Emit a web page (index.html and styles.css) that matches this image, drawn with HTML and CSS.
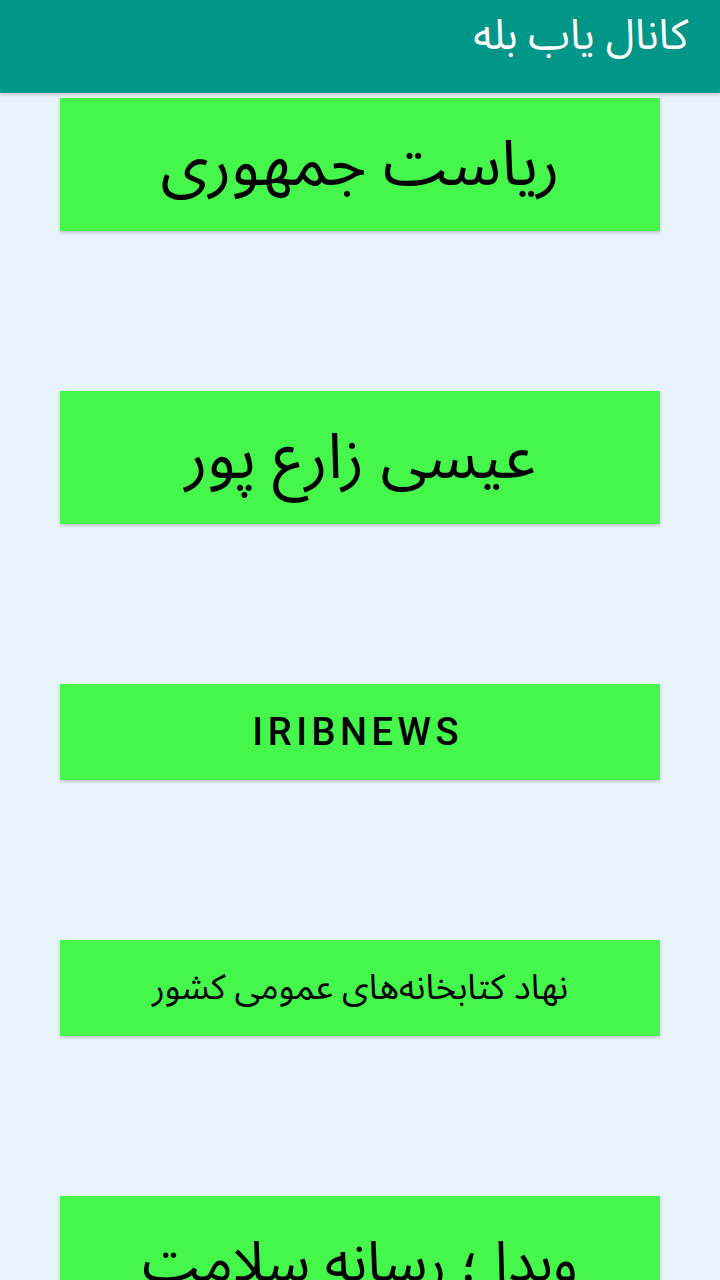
FILE: index.html
```html
<!DOCTYPE html>
<html lang="fa" dir="rtl">
<head>
<meta charset="utf-8">
<link rel="stylesheet" href="styles.css">
</head>
<body>
<header class="appbar"><h1 class="title">کانال یاب بله</h1></header>
<main class="list">
  <div class="btn btn-tall"><span class="label label-xl">ریاست جمهوری</span></div>
  <div class="btn btn-tall"><span class="label label-xl">عیسی زارع پور</span></div>
  <div class="btn"><span class="label label-latin">IRIBNEWS</span></div>
  <div class="btn"><span class="label label-md">نهاد کتابخانه‌های عمومی کشور</span></div>
  <div class="btn btn-tall"><span class="label label-lg">وبدا ؛ رسانه سلامت</span></div>
</main>
</body>
</html>
```
FILE: styles.css
```css
html, body {
  margin: 0;
  padding: 0;
}
body {
  width: 720px;
  height: 1280px;
  overflow: hidden;
  background: #e8f4fc;
  font-family: "Noto Sans Arabic", "DejaVu Sans", sans-serif;
}
.appbar {
  height: 93px;
  background: #009688;
  display: flex;
  align-items: center;
  padding: 0 32px;
  box-shadow: 0 2px 4px rgba(0,0,0,0.18);
}
.title {
  margin: 0;
  color: #ffffff;
  font-weight: normal;
  font-size: 42px;
  line-height: 1.4;
  padding-bottom: 20px;
}
.list {
  display: flex;
  flex-direction: column;
  align-items: center;
  gap: 160px;
  padding-top: 5px;
}
.btn {
  width: 600px;
  height: 96px;
  background: #44f74a;
  display: flex;
  align-items: center;
  justify-content: center;
  box-shadow: 0 2px 3px rgba(0,0,0,0.18);
  flex-shrink: 0;
}
.btn-tall {
  height: 133px;
}
.label {
  color: #000;
  line-height: 1;
}
.label-xl {
  font-size: 63px;
}
.label-lg {
  font-size: 56px;
}
.label-md {
  font-size: 35px;
}
.label-latin {
  font-family: Roboto, "Liberation Sans", sans-serif;
  font-weight: 500;
  font-size: 38px;
  letter-spacing: 0.12em;
  margin-left: -0.12em;
}
```
